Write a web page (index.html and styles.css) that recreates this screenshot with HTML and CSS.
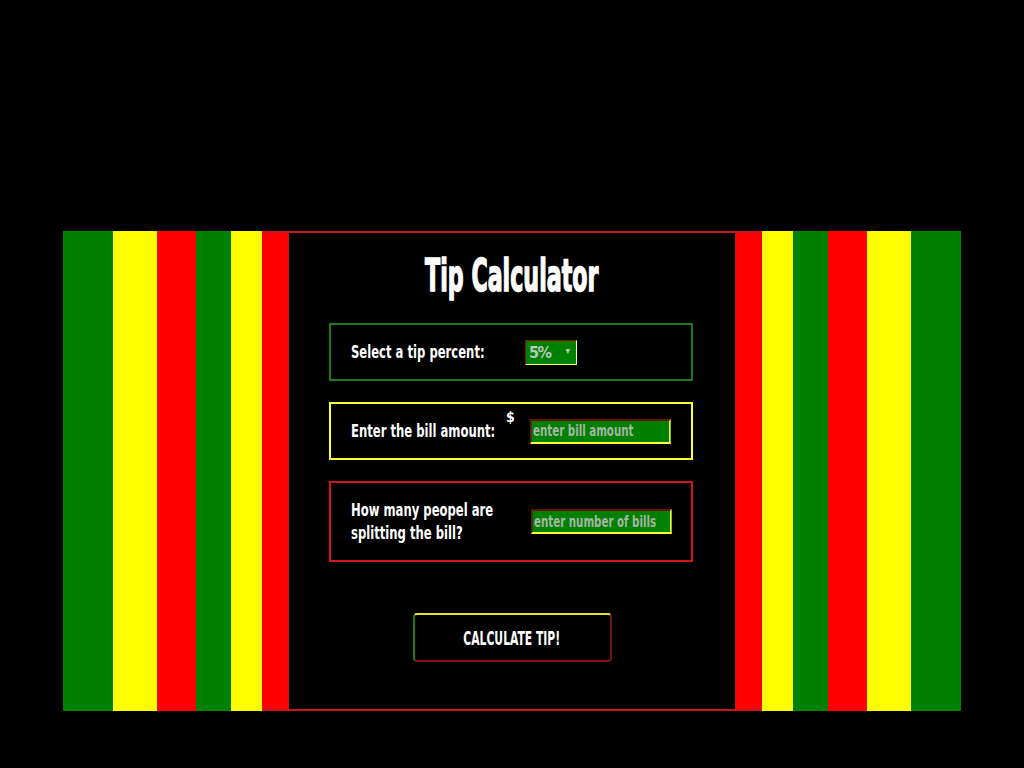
FILE: index.html
```html
<!DOCTYPE html>
<html lang="en">
<head>
<meta charset="utf-8">
<title>Tip Calculator</title>
<link rel="stylesheet" href="styles.css">
</head>
<body>
<div class="flag">
  <div class="stripe green w50"></div>
  <div class="stripe yellow w44"></div>
  <div class="stripe red w39"></div>
  <div class="stripe green w35"></div>
  <div class="stripe yellow w31"></div>
  <div class="center">
    <div class="panel">
      <h1 class="title">Tip Calculator</h1>
      <div class="box box-green">
        <span class="label label-wide"><span class="squeeze">Select a tip percent:</span></span>
        <div class="select-wrap">
          <select class="select">
            <option>5%</option>
            <option>10%</option>
            <option>15%</option>
            <option>20%</option>
          </select>
        </div>
      </div>
      <div class="box box-yellow">
        <span class="label label-bill"><span class="squeeze">Enter the bill amount:</span></span>
        <span class="dollar">$</span>
        <input class="field" type="text" placeholder="enter bill amount">
      </div>
      <div class="box box-red">
        <span class="label label-split"><span class="squeeze">How many peopel are<br>splitting the bill?</span></span>
        <input class="field" type="text" placeholder="enter number of bills">
      </div>
      <div class="actions">
        <button class="calc" type="button"><span class="calc-text">CALCULATE TIP!</span></button>
      </div>
    </div>
  </div>
  <div class="stripe yellow w31"></div>
  <div class="stripe green w35"></div>
  <div class="stripe red w39"></div>
  <div class="stripe yellow w44"></div>
  <div class="stripe green w50"></div>
</div>
</body>
</html>
```

FILE: styles.css
```css
html, body {
  margin: 0;
  padding: 0;
  background: #000;
}

body {
  font-family: "DejaVu Sans Condensed", "DejaVu Sans", sans-serif;
  font-weight: bold;
  color: #fff;
}

.flag {
  display: flex;
  width: 898px;
  height: 480px;
  margin: 231px 0 0 63px;
}

.stripe { flex: none; height: 100%; }
.green { background: #008000; }
.yellow { background: #ffff00; }
.red { background: #ff0000; }
.w50 { width: 50px; }
.w44 { width: 44px; }
.w39 { width: 39px; }
.w35 { width: 35px; }
.w31 { width: 31px; }

.center {
  flex: none;
  width: 500px;
  box-sizing: border-box;
  background: #ff0000;
  border-top: 2px solid #c8161d;
  border-bottom: 2px solid #c8161d;
  padding: 0 26px;
}

.panel {
  height: 100%;
  background: #000;
  border-left: 1px solid #c8161d;
  border-right: 1px solid #c8161d;
  display: flex;
  flex-direction: column;
  align-items: center;
}

.title {
  margin: 18px 0 0;
  font-size: 44px;
  line-height: 50px;
  white-space: nowrap;
  transform: scaleX(0.56);
  -webkit-text-stroke: 1.5px #fff;
}

.box {
  box-sizing: border-box;
  width: 364px;
  margin-right: 2px;
  display: flex;
  align-items: center;
  padding: 0 20px;
  border: 2px solid;
}

.box-green {
  margin-top: 22px;
  height: 58px;
  border-color: #1a7a1a;
}

.box-yellow {
  margin-top: 21px;
  height: 58px;
  border-color: #ffff33;
}

.box-red {
  margin-top: 21px;
  height: 81px;
  border-color: #d2151d;
}

.label {
  font-size: 17px;
  line-height: 23px;
  flex: none;
  white-space: nowrap;
}

.squeeze {
  display: inline-block;
  transform: scaleX(0.76);
  transform-origin: left center;
}

.label-wide { width: 174px; }
.label-bill { width: 155px; }
.label-split { width: 180px; }

.dollar {
  align-self: flex-start;
  margin-top: 5px;
  width: 25px;
  font-size: 14px;
  line-height: 16px;
}

.select-wrap {
  position: relative;
  width: 52px;
  height: 25px;
}

.select-wrap::after {
  content: "\25BE";
  position: absolute;
  right: 7px;
  top: 5px;
  font-size: 10px;
  color: #b5c9b5;
  pointer-events: none;
}

.select {
  -webkit-appearance: none;
  appearance: none;
  box-sizing: border-box;
  width: 52px;
  height: 25px;
  margin: 0;
  padding: 0 0 0 3px;
  background: #008000;
  color: #b9c9b9;
  font: bold 16px "DejaVu Sans Condensed", "DejaVu Sans", sans-serif;
  letter-spacing: -1.5px;
  border: 1px solid;
  border-color: #8b1010 #ffff66 #ffff66 #8b1010;
  border-radius: 0;
}

.field {
  box-sizing: border-box;
  width: 185px;
  height: 25px;
  margin: 0 -44px 0 0;
  padding: 0 0 0 2px;
  transform: scaleX(0.76);
  transform-origin: left center;
  background: #008000;
  color: #b9c9b9;
  font: bold 15px "DejaVu Sans Condensed", "DejaVu Sans", sans-serif;
  border: 2px solid;
  border-color: #6b1010 #ffff33 #ffff33 #6b1010;
  outline: none;
}

.field::placeholder {
  color: #a5b5a5;
  opacity: 1;
}

.actions {
  margin-top: 51px;
}

.calc {
  box-sizing: border-box;
  width: 199px;
  height: 49px;
  background: #000;
  color: #fff;
  font: bold 20px "DejaVu Sans Condensed", "DejaVu Sans", sans-serif;
  border: 2px solid;
  border-color: #e5e32d #6a1a10 #8b1010 #1f7a10;
  border-radius: 4px;
  cursor: pointer;
  padding: 0;
  white-space: nowrap;
}

.calc-text {
  display: inline-block;
  transform: scaleX(0.6);
}
```
